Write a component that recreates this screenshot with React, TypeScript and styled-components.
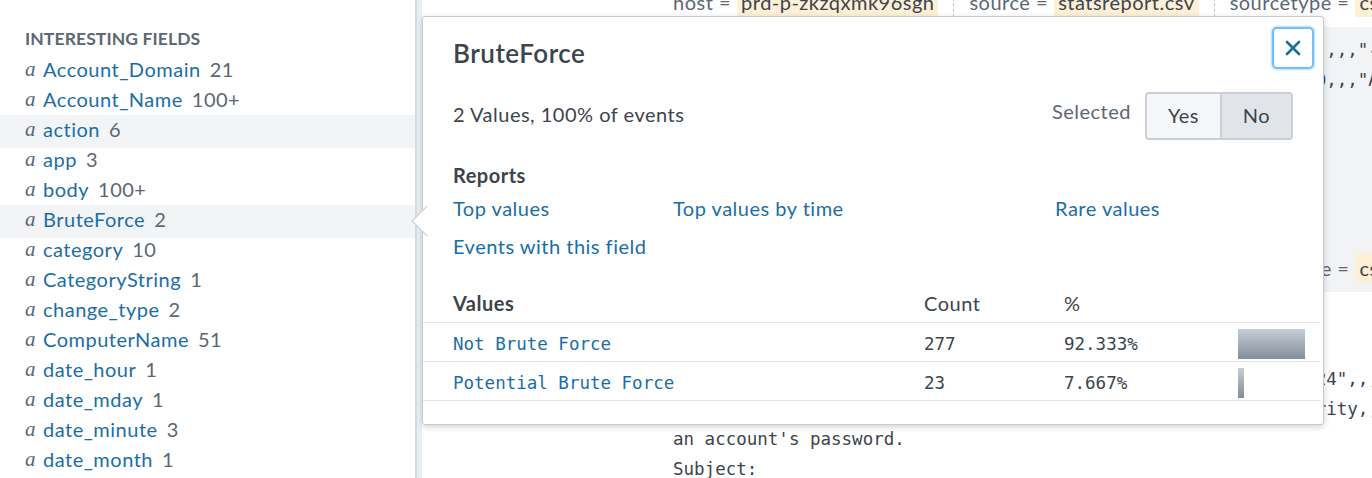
import React from 'react';
import styled, { createGlobalStyle } from 'styled-components';

const SANS = `Lato, "Open Sans", "Liberation Sans", sans-serif`;
const MONO = `"DejaVu Sans Mono", "Liberation Mono", monospace`;

const GlobalStyle = createGlobalStyle`
  html, body { margin: 0; padding: 0; background: #fff; }
  body { font-family: ${SANS}; color: #3c444d; letter-spacing: 0.5px; }
  *, *::before, *::after { box-sizing: border-box; }
`;

const Page = styled.div`
  position: relative;
  display: flex;
  width: 1372px;
  height: 478px;
  overflow: hidden;
  font-family: ${SANS};
  letter-spacing: 0.5px;
`;

/* ---------- Sidebar ---------- */
const Sidebar = styled.aside`
  width: 417px;
  flex: none;
  border-right: 2px solid #d5dae0;
  padding-top: 29px;
`;

const SectionTitle = styled.h3`
  margin: 0 0 6px 25px;
  font-size: 17.5px;
  line-height: 20px;
  font-weight: 700;
  letter-spacing: 0.1px;
  color: #5c6773;
  text-transform: uppercase;
`;

const FieldRow = styled.div<{ $active?: boolean }>`
  display: flex;
  align-items: center;
  height: 30px;
  padding: 0 0 2px 25px;
  font-size: 20px;
  white-space: nowrap;
  background: ${(p) => (p.$active ? '#f3f4f6' : 'transparent')};
  box-shadow: ${(p) => (p.$active ? '0 3px 0 #f3f4f6' : 'none')};
`;

const TypeGlyph = styled.span`
  width: 18px;
  flex: none;
  font-family: "Liberation Serif", "DejaVu Serif", serif;
  font-style: italic;
  font-size: 21px;
  letter-spacing: 0;
  color: #5c6773;
`;

const FieldName = styled.span`
  color: #1a6ea8;
`;

const FieldCount = styled.span`
  margin-left: 9px;
  color: #5c6773;
`;

/* ---------- Content (events) ---------- */
const Content = styled.main`
  flex: 1;
  min-width: 0;
  border-left: 5px solid #eceff2;
  overflow: hidden;
`;

const EventList = styled.div`
  margin-top: -13px;
`;

const FieldLine = styled.div<{ $mt?: number }>`
  display: flex;
  align-items: center;
  height: 30px;
  margin-top: ${(p) => p.$mt ?? 0}px;
  padding-left: 251px;
  white-space: nowrap;
  font-family: ${SANS};
  font-size: 20px;
  color: #5c6773;
`;

const FieldValue = styled.span`
  margin-left: 6px;
  padding: 0 4px;
  line-height: 30px;
  background: #fdf0d6;
  color: #3c444d;
`;

const Separator = styled.span`
  height: 30px;
  margin: 0 15px;
  border-left: 1px dashed #b7c0c9;
`;

const EventBlock = styled.div<{ $grey?: boolean; $mt: number; $pt: number; $pb: number }>`
  margin-top: ${(p) => p.$mt}px;
  padding: ${(p) => p.$pt}px 0 ${(p) => p.$pb}px;
  background: ${(p) => (p.$grey ? '#f2f3f5' : 'transparent')};
`;

const CodeLine = styled.div`
  height: 30px;
  line-height: 30px;
  padding-left: 251px;
  white-space: pre;
  font-family: ${MONO};
  font-size: 17.5px;
  letter-spacing: 0;
  color: #3c444d;
`;

/* ---------- Popover ---------- */
const Popover = styled.section`
  position: absolute;
  left: 422px;
  top: 16px;
  width: 902px;
  padding-bottom: 23px;
  background: #fff;
  border: 1px solid #c3cbd4;
  border-radius: 3px;
  box-shadow: 0 2px 6px rgba(0, 0, 0, 0.18);
  color: #3c444d;

  &::before {
    content: '';
    position: absolute;
    left: -7px;
    top: 193px;
    width: 22px;
    height: 22px;
    background: #fff;
    border-left: 1px solid #c3cbd4;
    border-bottom: 1px solid #c3cbd4;
    transform: rotate(45deg);
  }
`;

const Header = styled.header`
  display: flex;
  justify-content: space-between;
  align-items: flex-start;
  padding: 10px 9px 0 30px;
`;

const Title = styled.h2`
  margin: 11px 0 0;
  font-size: 26px;
  line-height: 30px;
  font-weight: 600;
  color: #3c444d;
`;

const CloseButton = styled.button`
  display: flex;
  align-items: center;
  justify-content: center;
  width: 42px;
  height: 42px;
  padding: 0;
  background: #fff;
  border: 2px solid #74c0f7;
  border-radius: 5px;
  box-shadow: 0 0 2px 1px #b4dcfb;
  cursor: pointer;
`;

const SummaryRow = styled.div`
  display: flex;
  align-items: center;
  justify-content: space-between;
  height: 48px;
  margin-top: 23px;
  padding: 0 30px;
  font-size: 20px;
`;

const SummaryText = styled.span`
  padding-bottom: 5px;
`;

const SelectedWrap = styled.div`
  display: flex;
  align-items: center;
`;

const SelectedLabel = styled.span`
  margin-right: 14px;
  padding-bottom: 11px;
  color: #5c6773;
`;

const ButtonGroup = styled.div`
  display: flex;
  height: 48px;
  border: 2px solid #c9d0d7;
  border-radius: 4px;
  overflow: hidden;
`;

const Segment = styled.button<{ $selected?: boolean; $w: number }>`
  width: ${(p) => p.$w}px;
  height: 100%;
  padding: 0 0 3px;
  border: none;
  border-left: ${(p) => (p.$selected ? '2px solid #c9d0d7' : 'none')};
  background: ${(p) => (p.$selected ? '#e1e5ea' : '#f5f7f9')};
  font-family: ${SANS};
  font-size: 20px;
  letter-spacing: 0.5px;
  color: #3c444d;
`;

const SubTitle = styled.h4<{ $mt: number }>`
  margin: ${(p) => p.$mt}px 0 0;
  padding-left: 30px;
  font-size: 20px;
  line-height: 30px;
  font-weight: 700;
  color: #3c444d;
`;

const LinkGrid = styled.div`
  display: grid;
  grid-template-columns: 220px 382px auto;
  row-gap: 8px;
  margin-top: 3px;
  padding-left: 30px;
  font-size: 20px;
  line-height: 30px;
`;

const Link = styled.a`
  color: #1a6ea8;
  text-decoration: none;
  cursor: pointer;
`;

const Table = styled.div`
  margin: 23px 3px 0 0;
`;

const TableRow = styled.div<{ $head?: boolean }>`
  display: grid;
  grid-template-columns: 501px 140px 174px 1fr;
  align-items: center;
  height: 39px;
  padding-top: ${(p) => (p.$head ? 0 : 3)}px;
  border-bottom: 1px solid #e1e5ea;
  font-family: ${(p) => (p.$head ? SANS : MONO)};
  font-size: ${(p) => (p.$head ? '20px' : '17.5px')};
  letter-spacing: ${(p) => (p.$head ? '0.5px' : '0')};
  color: #3c444d;
`;

const NameCell = styled.div<{ $head?: boolean }>`
  padding-left: 30px;
  font-weight: ${(p) => (p.$head ? 700 : 400)};
  color: ${(p) => (p.$head ? '#3c444d' : '#1a6ea8')};
`;

const Cell = styled.div``;

const Bar = styled.div`
  height: 30px;
  background: linear-gradient(#c6cdd5, #838e9a);
`;

const fields: { name: string; count: string; active?: boolean }[] = [
  { name: 'Account_Domain', count: '21' },
  { name: 'Account_Name', count: '100+' },
  { name: 'action', count: '6', active: true },
  { name: 'app', count: '3' },
  { name: 'body', count: '100+' },
  { name: 'BruteForce', count: '2', active: true },
  { name: 'category', count: '10' },
  { name: 'CategoryString', count: '1' },
  { name: 'change_type', count: '2' },
  { name: 'ComputerName', count: '51' },
  { name: 'date_hour', count: '1' },
  { name: 'date_mday', count: '1' },
  { name: 'date_minute', count: '3' },
  { name: 'date_month', count: '1' },
];

const values = [
  { name: 'Not Brute Force', count: '277', pct: 92.333 },
  { name: 'Potential Brute Force', count: '23', pct: 7.667 },
];

const Fields = () => (
  <>
    host =<FieldValue>prd-p-zkzqxmk96sgh</FieldValue>
    <Separator />
    source =<FieldValue>statsreport.csv</FieldValue>
    <Separator />
    sourcetype =<FieldValue>csv</FieldValue>
  </>
);

const CloseIcon = () => (
  <svg width="16" height="16" viewBox="0 0 16 16" aria-hidden="true">
    <path d="M2 2 L14 14 M14 2 L2 14" stroke="#1a6ea8" strokeWidth="2.6" strokeLinecap="round" fill="none" />
  </svg>
);

export default function App() {
  return (
    <>
      <GlobalStyle />
      <Page>
        <Sidebar>
          <SectionTitle>Interesting Fields</SectionTitle>
          {fields.map((f) => (
            <FieldRow key={f.name} $active={f.active}>
              <TypeGlyph>a</TypeGlyph>
              <FieldName>{f.name}</FieldName>
              <FieldCount>{f.count}</FieldCount>
            </FieldRow>
          ))}
        </Sidebar>

        <Content>
          <EventList>
            <FieldLine>
              <Fields />
            </FieldLine>
            <EventBlock $grey $mt={10} $pt={8} $pb={9}>
              <CodeLine>{'11/06/2023 09:14:52 AM,"An account failed to log on.","Logon",,,,"-",,,"-"'}</CodeLine>
              <CodeLine>{'"Audit Failure","Microsoft Windows security auditing.",12544,0,,,"An account failed"'}</CodeLine>
              <CodeLine>{'An account failed to log on.'}</CodeLine>
              <CodeLine>{' '}</CodeLine>
              <CodeLine>{'Subject:'}</CodeLine>
              <CodeLine>{'    Security ID:    S-1-0-0'}</CodeLine>
              <CodeLine>{'    Account Name:   -'}</CodeLine>
              <FieldLine $mt={8}>
                <Fields />
              </FieldLine>
            </EventBlock>
            <EventBlock $mt={0} $pt={12} $pb={0}>
              <CodeLine>{'11/06/2023 09:15:03 AM'}</CodeLine>
              <CodeLine>{'LogName=Security'}</CodeLine>
              <CodeLine>{'11/06/2023 09:15:03 AM,"Microsoft Windows security audit","4624",,,"Logon"'}</CodeLine>
              <CodeLine>{'"Audit Success","Information","Logon", Microsoft-Windows-Security,,,An'}</CodeLine>
              <CodeLine>{"an account's password."}</CodeLine>
              <CodeLine>{'Subject:'}</CodeLine>
            </EventBlock>
          </EventList>
        </Content>

        <Popover>
          <Header>
            <Title>BruteForce</Title>
            <CloseButton aria-label="Close">
              <CloseIcon />
            </CloseButton>
          </Header>

          <SummaryRow>
            <SummaryText>2 Values, 100% of events</SummaryText>
            <SelectedWrap>
              <SelectedLabel>Selected</SelectedLabel>
              <ButtonGroup>
                <Segment $w={73}>Yes</Segment>
                <Segment $w={71} $selected>
                  No
                </Segment>
              </ButtonGroup>
            </SelectedWrap>
          </SummaryRow>

          <SubTitle $mt={20}>Reports</SubTitle>
          <LinkGrid>
            <Link>Top values</Link>
            <Link>Top values by time</Link>
            <Link>Rare values</Link>
            <Link>Events with this field</Link>
          </LinkGrid>

          <Table>
            <TableRow $head>
              <NameCell $head>Values</NameCell>
              <Cell>Count</Cell>
              <Cell>%</Cell>
              <Cell />
            </TableRow>
            {values.map((v) => (
              <TableRow key={v.name}>
                <NameCell>{v.name}</NameCell>
                <Cell>{v.count}</Cell>
                <Cell>{v.pct.toFixed(3)}%</Cell>
                <Cell>
                  <Bar style={{ width: `${(v.pct * 0.727).toFixed(1)}px` }} />
                </Cell>
              </TableRow>
            ))}
          </Table>
        </Popover>
      </Page>
    </>
  );
}
